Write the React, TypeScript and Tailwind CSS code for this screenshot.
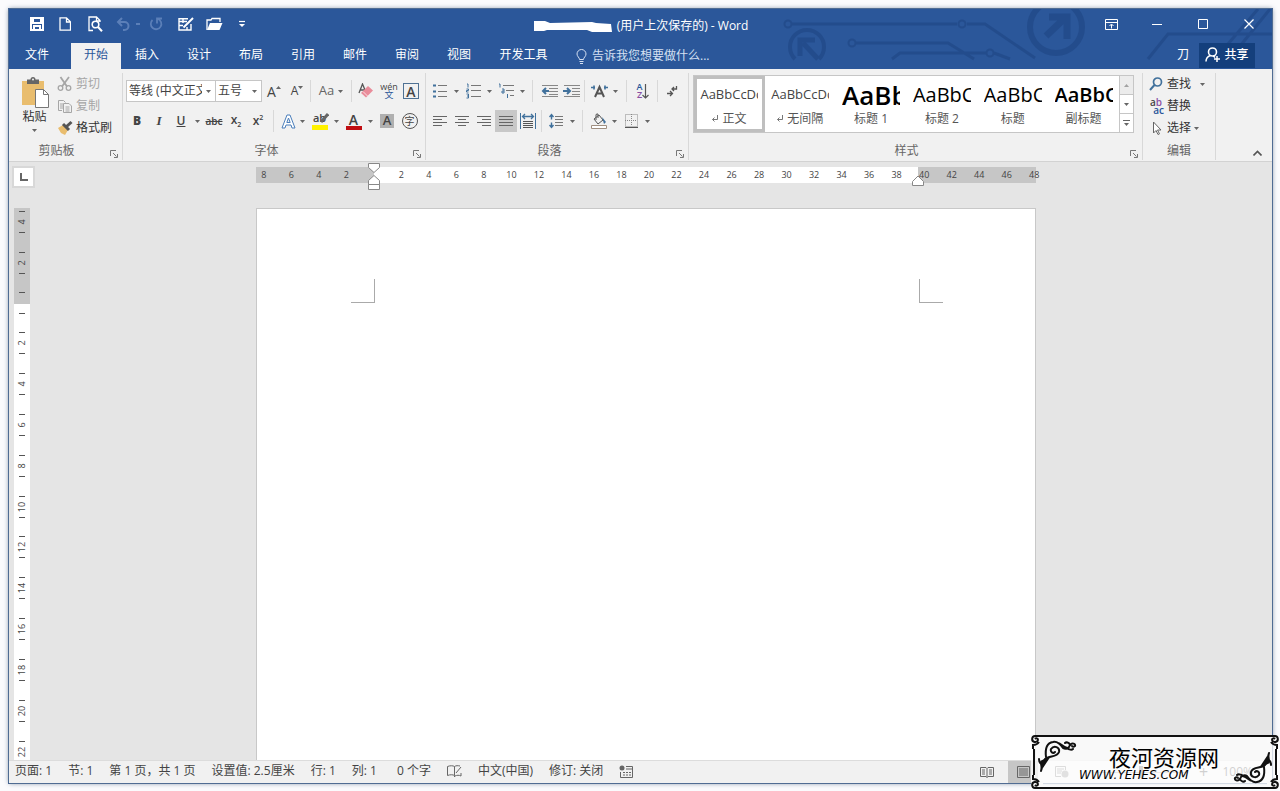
import type { ReactNode } from 'react'
import clsx from 'clsx'

const TABS = ['插入', '设计', '布局', '引用', '邮件', '审阅', '视图']

const STYLES = [
  { name: '正文', sample: 'AaBbCcDd', mark: true, look: 'text-[13px]' },
  { name: '无间隔', sample: 'AaBbCcDd', mark: true, look: 'text-[13px]' },
  { name: '标题 1', sample: 'AaBb', look: 'text-[26px] font-semibold text-black' },
  { name: '标题 2', sample: 'AaBbC', look: 'text-[20px] text-black' },
  { name: '标题', sample: 'AaBbC', look: 'text-[20px] text-black' },
  { name: '副标题', sample: 'AaBbC', look: 'text-[20px] font-semibold text-black' },
]

const H_MARKS = Array.from({ length: 29 }, (_, i) => i * 2 - 8)
const V_MARKS = Array.from({ length: 11 }, (_, i) => i * 2 + 2)

function Icon({ w = 16, h = 16, children }: { w?: number; h?: number; children: ReactNode }) {
  return (
    <svg width={w} height={h} viewBox={`0 0 ${w} ${h}`} fill="none" stroke="currentColor" className="shrink-0" aria-hidden="true">
      {children}
    </svg>
  )
}

function Arrow() {
  return (
    <svg width="5" height="3" viewBox="0 0 5 3" className="shrink-0 fill-[#666]" aria-hidden="true">
      <path d="M0 0h5L2.5 3z" />
    </svg>
  )
}

function Tool({ label, className = 'w-[22px]', children }: { label: string; className?: string; children: ReactNode }) {
  return (
    <button type="button" aria-label={label} title={label} className={clsx('flex h-[22px] shrink-0 items-center justify-center', className)}>
      {children}
    </button>
  )
}

function Drop({ label, className = 'w-[9px]' }: { label: string; className?: string }) {
  return (
    <Tool label={label} className={className}>
      <Arrow />
    </Tool>
  )
}

function Sep({ className = 'mx-[2px]' }: { className?: string }) {
  return <span className={clsx('h-[22px] w-px shrink-0 bg-[#d8d8d8]', className)} />
}

function Group({ title, launcher = true, className, children }: { title: string; launcher?: boolean; className?: string; children: ReactNode }) {
  return (
    <section aria-label={title} className={clsx('relative mt-1 mb-px flex flex-col border-r border-[#d8d8d8]', className)}>
      <div className="flex-1">{children}</div>
      <div className={clsx('h-[18px] text-center leading-[18px] text-[#666]', launcher && 'pr-[18px]')}>{title}</div>
      {launcher && (
        <button type="button" aria-label={`${title}设置`} className="absolute right-1 bottom-[2px]">
          <Icon w={8} h={8}>
            <path d="M.5 6V.5H6M3 3l3.5 3.5M7.5 4v3.5H4" stroke="#777" />
          </Icon>
        </button>
      )}
    </section>
  )
}

function Lines({ rows }: { rows: [number, number][] }) {
  return (
    <Icon w={14} h={12}>
      {rows.map(([x1, x2], i) => (
        <path key={i} d={`M${x1} ${i * 3 + 1.5}H${x2}`} stroke="#666" />
      ))}
    </Icon>
  )
}

function Circuit() {
  return (
    <svg width="492" height="52" viewBox="0 0 492 52" fill="none" stroke="#1f4684" strokeWidth="3" opacity=".6" className="pointer-events-none absolute top-0 right-0" aria-hidden="true">
      <circle cx="8" cy="15" r="3.5" strokeWidth="2" />
      <path d="M12 15h165M187 15h18l50 34" />
      <circle cx="182" cy="15" r="3.5" strokeWidth="2" />
      <circle cx="72" cy="34" r="3.5" strokeWidth="2" />
      <path d="M76 34h92l26 16M112 50l8-6h86M214 44l16 6" />
      <circle cx="210" cy="44" r="3.5" strokeWidth="2" />
      <path d="M15 50a17 17 0 1 1 24 0" strokeWidth="4" />
      <path d="M38 50 23 34M20 47V31h15" strokeWidth="5" />
      <circle cx="276" cy="18" r="26" strokeWidth="6" />
      <path d="m266 27 20-19M269 8h18v22" strokeWidth="7" />
      <path d="m368 50 20-25h104M442 42l36-42M456 42l34-42" />
    </svg>
  )
}

function TitleBar() {
  const quick = 'flex h-[30px] items-center justify-center'
  const control = 'flex h-[30px] w-[46px] items-center justify-center'
  return (
    <div className="relative grid h-[34px] grid-cols-[1fr_auto_1fr] items-start">
      <div className="flex items-center pl-[14px]">
        <button type="button" aria-label="保存" className={clsx(quick, 'w-7')}>
          <Icon w={14} h={14}>
            <path d="M1 1h12v12H1zM3 1v5h8V1M4 13V9h6v4" strokeWidth="2" />
          </Icon>
        </button>
        <button type="button" aria-label="新建" className={clsx(quick, 'w-7')}>
          <Icon w={12} h={14}>
            <path d="M1 .8h6.500l4 4v8.400H1zM7.500 1v4h4" strokeWidth="1.300" />
          </Icon>
        </button>
        <button type="button" aria-label="打印预览" className={clsx(quick, 'w-8')}>
          <Icon w={15} h={16}>
            <path d="M5 14.500H1V1h7.500L12 4.500V6M8.500 1v4H12" strokeWidth="1.300" />
            <circle cx="7.500" cy="8.500" r="3.300" strokeWidth="1.600" />
            <path d="m10 11 4 4.200" strokeWidth="2" />
          </Icon>
        </button>
        <button type="button" aria-label="撤消" disabled className={clsx(quick, 'w-6 text-[#5b7fb8]')}>
          <Icon w={14} h={14}>
            <path d="M6 1 2 5l4 4M2 5h6.500a4 4 0 0 1 0 8H7" strokeWidth="2" />
          </Icon>
        </button>
        <span className="mx-px h-[2px] w-1 bg-[#5b7fb8]" />
        <button type="button" aria-label="恢复" disabled className={clsx(quick, 'w-[30px] text-[#5b7fb8]')}>
          <Icon w={14} h={14}>
            <path d="M3.500 3A5.300 5.300 0 1 0 9 2M8 6.500V1.500h5" strokeWidth="1.800" />
          </Icon>
        </button>
        <button type="button" aria-label="绘制表格" className={clsx(quick, 'w-[30px]')}>
          <Icon w={16} h={14}>
            <path d="M10 1.700H1v11.300h12V7M1 4.500h8M1 8.500h4M5 2v4M9 10v3" strokeWidth="1.400" />
            <path d="m5.500 10.500 9.500-9.500" strokeWidth="2" />
          </Icon>
        </button>
        <button type="button" aria-label="打开" className={clsx(quick, 'w-[26px]')}>
          <Icon w={17} h={14}>
            <path d="M1 13V3h4l1-1.500h8V5" strokeWidth="1.300" />
            <path d="M1 13 4 6h12.500l-3 7z" fill="currentColor" stroke="none" />
          </Icon>
        </button>
        <button type="button" aria-label="自定义快速访问工具栏" className={clsx(quick, 'w-[30px]')}>
          <Icon w={6} h={8}>
            <path d="M0 1.500h6" strokeWidth="1.200" />
            <path d="M0 4h6L3 7z" fill="currentColor" stroke="none" />
          </Icon>
        </button>
      </div>
      <h1 className="flex h-[34px] items-center gap-1 text-[12px]">
        <Icon w={80} h={12}>
          <path d="M1 1h11l5 2 42-1 4 1 15 1 1 8H59l-5-2H14l-3 1H1z" fill="#fff" stroke="none" />
        </Icon>
        (用户上次保存的) - Word
      </h1>
      <div className="flex justify-end">
        <button type="button" aria-label="功能区显示选项" className={control}>
          <Icon w={13} h={11}>
            <path d="M.5.5h12v10H.5zM.5 3.500h12M6.500 9.500V5.500M4.500 7l2-2 2 2" />
          </Icon>
        </button>
        <button type="button" aria-label="最小化" className={control}>
          <Icon w={10} h={10}>
            <path d="M0 5.500h10" />
          </Icon>
        </button>
        <button type="button" aria-label="最大化" className={control}>
          <Icon w={10} h={10}>
            <path d="M.5.5h9v9h-9z" />
          </Icon>
        </button>
        <button type="button" aria-label="关闭" className={control}>
          <Icon w={10} h={10}>
            <path d="m.5.5 9 9M9.500.5l-9 9" strokeWidth="1.200" />
          </Icon>
        </button>
      </div>
    </div>
  )
}

function TabBar() {
  return (
    <nav className="relative flex h-[26px] items-stretch pl-[2px]">
      <button type="button" className="w-[52px] pb-[2px]">文件</button>
      <button type="button" aria-current="page" className="ml-2 w-[50px] bg-[#f1f1f1] pb-[2px] text-[#2b579a]">开始</button>
      {TABS.map((tab) => (
        <button key={tab} type="button" className="w-[52px] pb-[2px]">{tab}</button>
      ))}
      <button type="button" className="w-[77px] pb-[2px]">开发工具</button>
      <label className="flex flex-1 items-center pl-[14px] text-[#d5e0f2]">
        <Icon w={11} h={15}>
          <path d="M3.500 10.500C3.500 8.500 1 7.500 1 5a4.500 4.500 0 0 1 9 0c0 2.500-2.500 3.500-2.500 5.500zM3.500 12.500h4M4 14.500h3" />
        </Icon>
        <input aria-label="告诉我您想要做什么" placeholder="告诉我您想要做什么..." className="ml-[5px] w-[150px] bg-transparent outline-none placeholder:text-[#d5e0f2]" />
      </label>
      <button type="button" className="px-[10px] pb-[2px]">刀</button>
      <button type="button" className="mr-[17px] mb-px flex w-[56px] items-center justify-center gap-1 bg-[#143f7c] pb-[2px] font-medium">
        <Icon w={15} h={15}>
          <circle cx="7.500" cy="5" r="4" strokeWidth="1.600" />
          <path d="M1 14.500c0-3 1.500-5 4.500-6M8 9c1 .4 1.500.8 2 1.500M12 9v6M9 12h6" strokeWidth="1.500" />
        </Icon>
        共享
      </button>
    </nav>
  )
}

function ClipboardGroup() {
  const row = 'flex h-[22px] items-center gap-[3px]'
  return (
    <Group title="剪贴板" className="w-[114px] shrink-0">
      <div className="flex pl-[12px]">
        <button type="button" className="mt-1 flex w-[27px] flex-col items-center">
          <svg width="28" height="31" viewBox="0 0 28 31" aria-hidden="true">
            <path d="M1 4h22v24H1z" fill="#e9bd6e" />
            <path d="M6 2.500h3.500a2.500 2.500 0 0 1 5 0H18V7H6z" fill="#666" />
            <circle cx="12" cy="2.500" r="1" fill="#f1f1f1" />
            <path d="M14.500 12.500h8l5 5v13h-13z" fill="#fff" stroke="#777" />
            <path d="M22.500 12.500v5h5" fill="none" stroke="#777" />
          </svg>
          <span className="leading-[17px] whitespace-nowrap text-[#333]">粘贴</span>
          <span className="mt-[4px] flex"><Arrow /></span>
        </button>
        <div className="ml-[9px] flex flex-col">
          <button type="button" disabled className={clsx(row, 'text-[#a6a6a6]')}>
            <Icon w={16} h={16}>
              <path d="m3.500 1 6.500 9.500M12 1 5 10.500" strokeWidth="1.800" />
              <circle cx="3.500" cy="12" r="2.300" strokeWidth="1.300" />
              <circle cx="11.500" cy="12" r="2.300" strokeWidth="1.300" />
            </Icon>
            剪切
          </button>
          <button type="button" disabled className={clsx(row, 'text-[#a6a6a6]')}>
            <Icon w={16} h={16}>
              <path d="M5 12.500H1.500v-10h5l2 2M3 6h3M3 8h3M3 10h3" />
              <path d="M6.500 5.500H12l2.500 2.500v6.500h-8zM8.500 9h4M8.500 11h4M8.500 13h4" />
            </Icon>
            复制
          </button>
          <button type="button" className={clsx(row, 'text-[#333]')}>
            <Icon w={16} h={16}>
              <path d="m1 8 5-3 5 5-3 5-4-2z" fill="#e9bd6e" stroke="none" />
              <path d="m6 4 6 6" stroke="#555" strokeWidth="3" />
              <path d="m9 7 5.500-5" stroke="#555" strokeWidth="3" />
            </Icon>
            格式刷
          </button>
        </div>
      </div>
    </Group>
  )
}

function FontGroup() {
  return (
    <Group title="字体" className="w-[303px] shrink-0 pl-[3px]">
      <div className="mt-[7px] flex h-[22px] items-center">
        <label className="flex h-[22px] w-[90px] items-center border border-[#c6c6c6] bg-white pr-1">
          <select aria-label="字体" className="min-w-0 flex-1 appearance-none overflow-hidden pl-[2px] [text-overflow:clip]">
            <option>等线 (中文正文)</option>
          </select>
          <span className="ml-1 flex"><Arrow /></span>
        </label>
        <label className="-ml-px flex h-[22px] w-[47px] items-center border border-[#c6c6c6] bg-white pr-1">
          <select aria-label="字号" className="min-w-0 flex-1 appearance-none pl-[2px]">
            <option>五号</option>
          </select>
          <Arrow />
        </label>
        <Tool label="增大字号" className="w-6">
          <span className="text-[14px]">A</span>
          <span className="mb-2 flex rotate-180"><Arrow /></span>
        </Tool>
        <Tool label="减小字号">
          <span className="text-[12px]">A</span>
          <span className="mb-2 flex"><Arrow /></span>
        </Tool>
        <Sep />
        <Tool label="更改大小写" className="w-9 gap-1">
          <span className="text-[13px] text-[#666]">Aa</span>
          <Arrow />
        </Tool>
        <Sep />
        <Tool label="清除所有格式" className="w-6">
          <Icon w={16} h={16}>
            <path d="M1 10 4.500 1 7 7M2.500 7h4" stroke="#555" strokeWidth="1.300" />
            <path d="m3 10 7-7 5 4.500-7 7z" fill="#e98c9a" stroke="none" />
            <path d="m5 8.500 4.500 4.500" stroke="#fbdde1" />
          </Icon>
        </Tool>
        <Tool label="拼音指南">
          <span className="flex flex-col items-center leading-[8px]">
            <span className="text-[9px]">wén</span>
            <span className="text-[9px] text-[#2b579a]">文</span>
          </span>
        </Tool>
        <Tool label="字符边框">
          <span className="flex h-4 w-4 items-center justify-center border border-[#4f7294] text-[14px] font-semibold">A</span>
        </Tool>
      </div>
      <div className="mt-2 flex h-[22px] items-center font-semibold">
        <Tool label="加粗"><b>B</b></Tool>
        <Tool label="倾斜"><i className="font-['Liberation_Serif'] text-[13px]">I</i></Tool>
        <Tool label="下划线"><u>U</u></Tool>
        <Drop label="下划线选项" className="w-[11px]" />
        <Tool label="删除线"><s className="text-[10px]">abc</s></Tool>
        <Tool label="下标"><span>x<span className="align-sub text-[7px]">2</span></span></Tool>
        <Tool label="上标"><span>x<span className="align-super text-[7px]">2</span></span></Tool>
        <Sep className="mx-1" />
        <Tool label="文本效果" className="w-5">
          <Icon w={15} h={15}>
            <path d="M1 14 6 1h3l5 13h-3l-1-3H5l-1 3zM5.800 8.500h3.400L7.500 4z" stroke="#4a7ebb" fill="#fff" />
          </Icon>
        </Tool>
        <Drop label="文本效果选项" />
        <Tool label="以不同颜色突出显示文本" className="w-[25px]">
          <span className="relative flex h-[17px] w-4 justify-center border-b-5 border-[#fff200] text-[11px] leading-[10px] font-semibold">
            ab
            <svg width="10" height="12" viewBox="0 0 10 12" className="absolute top-0 -right-px" aria-hidden="true">
              <path d="M9 1 2 9" stroke="#666" strokeWidth="3" />
            </svg>
          </span>
        </Tool>
        <Drop label="突出显示选项" />
        <Tool label="字体颜色" className="w-[25px]">
          <span className="flex h-[17px] w-4 justify-center border-b-4 border-[#c00d12] text-[14px] leading-[13px]">A</span>
        </Tool>
        <Drop label="字体颜色选项" />
        <Tool label="字符底纹" className="w-6">
          <span className="flex h-[14px] w-[14px] items-center justify-center bg-[#b0b0b0] text-[13px]">A</span>
        </Tool>
        <Tool label="带圈字符" className="w-[21px]">
          <span className="flex h-4 w-4 items-center justify-center rounded-full border border-[#555] text-[10px] font-normal">字</span>
        </Tool>
      </div>
    </Group>
  )
}

function ParagraphGroup() {
  return (
    <Group title="段落" className="w-[263px] shrink-0 pl-[3px]">
      <div className="mt-[7px] flex h-[22px] items-center">
        <Tool label="项目符号">
          <Icon w={14} h={14}>
            <path d="M0 1.500h3M0 7.500h3M0 12.500h3" stroke="#41719c" strokeWidth="2" />
            <path d="M5 1.500h9M5 7.500h9M5 12.500h9" stroke="#777" />
          </Icon>
        </Tool>
        <Drop label="项目符号库" className="w-[11px]" />
        <Tool label="编号" className="w-[23px]">
          <Icon w={15} h={16}>
            <path d="M1 1h1v3.500M.5 6h2v1.500h-2V9h2M.5 11h2v4h-2M1 13h1" stroke="#41719c" />
            <path d="M5 2.500h10M5 7.500h10M5 13.500h10" stroke="#777" />
          </Icon>
        </Tool>
        <Drop label="编号库" />
        <Tool label="多级列表" className="w-6">
          <Icon w={16} h={16}>
            <path d="M1 1h1v3.500M4 6h2v4H4V8h2M9.500 11v4" stroke="#41719c" />
            <path d="M5 2.500h11M8 7.500h8M12 12.500h4" stroke="#777" />
          </Icon>
        </Tool>
        <Drop label="列表库" />
        <Sep className="mx-[5px]" />
        <Tool label="减少缩进量">
          <Icon w={17} h={14}>
            <path d="M1 1.500h16M8 4.500h9M8 7.500h9M8 10.500h9M1 12.500h16" stroke="#888" />
            <path d="M8 7H2M5 4 2 7l3 3" stroke="#41719c" strokeWidth="2" />
          </Icon>
        </Tool>
        <Tool label="增加缩进量">
          <Icon w={17} h={14}>
            <path d="M1 1.500h16M9 4.500h8M9 7.500h8M9 10.500h8M1 12.500h16" stroke="#888" />
            <path d="M0 7h6M4 4l3 3-3 3" stroke="#41719c" strokeWidth="2" />
          </Icon>
        </Tool>
        <Sep />
        <Tool label="中文版式" className="w-6">
          <Icon w={17} h={14}>
            <path d="m4 13 4.500-10L13 13M5.500 9.500h6" stroke="#555" strokeWidth="2" />
            <path d="M0 3.500h4M13 3.500h4M3 1.500v4M14 1.500v4" stroke="#41719c" strokeWidth="1.600" />
          </Icon>
        </Tool>
        <Drop label="中文版式选项" />
        <Sep className="mx-[6px]" />
        <Tool label="排序" className="w-5">
          <span className="flex flex-col text-[9px] leading-[8px] font-semibold">
            <span className="text-[#2b579a]">A</span>
            <span className="text-[#8a4fa3]">Z</span>
          </span>
          <Icon w={7} h={15}>
            <path d="M3.500 0v14M.5 11l3 3 3-3" stroke="#555" strokeWidth="1.200" />
          </Icon>
        </Tool>
        <Sep className="mx-1" />
        <Tool label="显示编辑标记" className="w-5">
          <Icon w={12} h={12}>
            <path d="M10.500 1v3H6M8 2 6 4l2 2M1 8.500h5M4 6l2.500 2.500L4 11" stroke="#555" strokeWidth="1.300" />
          </Icon>
        </Tool>
      </div>
      <div className="mt-2 flex h-[22px] items-center">
        <Tool label="左对齐"><Lines rows={[[0, 14], [0, 9], [0, 14], [0, 9]]} /></Tool>
        <Tool label="居中"><Lines rows={[[0, 14], [3, 11], [0, 14], [3, 11]]} /></Tool>
        <Tool label="右对齐"><Lines rows={[[0, 14], [5, 14], [0, 14], [5, 14]]} /></Tool>
        <Tool label="两端对齐" className="w-[22px] bg-[#c8c8c8]"><Lines rows={[[0, 14], [0, 14], [0, 14], [0, 14]]} /></Tool>
        <Tool label="分散对齐">
          <Icon w={16} h={16}>
            <path d="M.5 0v16M15.500 0v16" stroke="#41719c" />
            <path d="M3 3.500h10M5 1 2.500 3.500 5 6M11 1l2.500 2.500L11 6" stroke="#41719c" strokeWidth="1.300" />
            <path d="M3 8.500h10M3 10.500h10M3 12.500h10M3 14.500h10" stroke="#555" />
          </Icon>
        </Tool>
        <Sep />
        <Tool label="行和段落间距" className="w-6">
          <Icon w={14} h={16}>
            <path d="M2.500 1.500v5M.5 4l2-2.500 2 2.500M2.500 9.500v5M.5 12l2 2.500 2-2.500" stroke="#41719c" strokeWidth="1.400" />
            <path d="M6 3.500h8M6 6.500h8M6 9.500h8M6 12.500h8" stroke="#777" />
          </Icon>
        </Tool>
        <Drop label="间距选项" />
        <Sep className="mx-[5px]" />
        <Tool label="底纹">
          <Icon w={16} h={16}>
            <path d="m3 6 5-4 4 5-5 4zM5 7V2q0-1.500 2-1v4" stroke="#555" />
            <path d="m11 4 4 5-2 2z" fill="#41719c" stroke="none" />
            <path d="M.5 12.500h15v3H.5z" fill="#fff" stroke="#a08f80" />
          </Icon>
        </Tool>
        <Drop label="底纹颜色" />
        <Tool label="边框" className="w-6">
          <Icon w={13} h={14}>
            <path d="M.5.5h12v12H.5zM6.500 0v12M0 6.500h12" stroke="#888" strokeDasharray="1 1" />
            <path d="M0 13.500h13" stroke="#555" />
          </Icon>
        </Tool>
        <Drop label="边框选项" />
      </div>
    </Group>
  )
}

function StylesGroup() {
  return (
    <Group title="样式" className="min-w-0 flex-1">
      <div className="mt-[2px] mr-2 ml-1 flex h-[58px] border border-[#c6c6c6] bg-white">
        {STYLES.map((style, i) => (
          <button
            key={style.name}
            type="button"
            className={clsx('flex min-w-0 flex-1 flex-col items-center overflow-hidden border-3', i === 0 ? 'border-[#bfbfbf]' : 'border-transparent')}
          >
            <span className={clsx('flex h-8 w-[58px] items-center overflow-hidden whitespace-nowrap', style.look)}>{style.sample}</span>
            <span className="flex items-center gap-1 leading-[15px] whitespace-nowrap text-[#555]">
              {style.mark && (
                <Icon w={6} h={7}>
                  <path d="M5.500 0v4.500h-5M2.500 2.500l-2 2 2 2" stroke="#777" />
                </Icon>
              )}
              {style.name}
            </span>
          </button>
        ))}
        <div className="flex w-[14px] flex-col border-l border-[#c6c6c6]">
          <button type="button" aria-label="上一行" disabled className="flex flex-1 items-center justify-center bg-[#e1e1e1] opacity-60">
            <span className="flex rotate-180"><Arrow /></span>
          </button>
          <button type="button" aria-label="下一行" className="flex flex-1 items-center justify-center border-y border-[#c6c6c6]"><Arrow /></button>
          <button type="button" aria-label="其他" className="flex flex-1 flex-col items-center justify-center gap-[2px]">
            <span className="h-px w-[7px] bg-[#666]" />
            <Arrow />
          </button>
        </div>
      </div>
    </Group>
  )
}

function EditingGroup() {
  const row = 'flex h-[22px] items-center gap-[3px] text-[#333]'
  return (
    <Group title="编辑" launcher={false} className="w-[73px] shrink-0">
      <div className="flex flex-col items-start pl-[5px]">
        <button type="button" className={row}>
          <Icon w={16} h={14}>
            <circle cx="9.500" cy="5" r="4" stroke="#41719c" strokeWidth="1.700" />
            <path d="m6.500 8-4.500 5" stroke="#41719c" strokeWidth="2" />
          </Icon>
          查找
          <span className="ml-[6px] flex"><Arrow /></span>
        </button>
        <button type="button" className={row}>
          <span className="flex w-4 flex-col text-[10px] leading-[8px] font-semibold">
            <span className="text-[#444]">a<span className="text-[#8a4fa3]">b</span></span>
            <span className="text-right text-[#2b579a]">ac</span>
          </span>
          替换
        </button>
        <button type="button" className={row}>
          <Icon w={16} h={14}>
            <path d="M5.500 1v11l2.500-2.500 2 4 1.500-.7-2-3.800H13z" stroke="#666" fill="#fff" />
          </Icon>
          选择
          <Arrow />
        </button>
      </div>
    </Group>
  )
}

function Ruler() {
  return (
    <div className="relative flex h-4 w-[780px] shrink-0">
      <div className="w-[118px] bg-[#c6c6c6]" />
      <div className="flex-1 bg-white" />
      <div className="w-[118px] bg-[#c6c6c6]" />
      <div className="absolute inset-y-0 -right-3 -left-[6px] flex text-[9px] leading-4 text-[#444]">
        {H_MARKS.map((n) => (
          <span key={n} className="min-w-0 flex-1 text-center">{n === 0 ? '' : Math.abs(n)}</span>
        ))}
      </div>
      <svg width="12" height="28" viewBox="0 0 12 28" className="absolute -top-1 left-[112px] fill-white stroke-[#888]" aria-hidden="true">
        <path d="M.5.5h11v4L6 9.500.5 4.500zM.5 21.500v-4L6 12.500l5.500 5v4zM.5 21.500h11v5H.5z" />
      </svg>
      <svg width="12" height="11" viewBox="0 0 12 11" className="absolute top-2 right-[112px] fill-white stroke-[#888]" aria-hidden="true">
        <path d="M.5 10.500v-4L6 1l5.500 5.500v4z" />
      </svg>
    </div>
  )
}

function VMark({ n }: { n: number }) {
  return (
    <div className="flex min-h-0 flex-1 flex-col items-center justify-center gap-1">
      <span className="h-px w-[6px] bg-[#555]" />
      <span className="flex h-3 w-4 -rotate-90 items-center justify-center text-[9px]">{n}</span>
      <span className="h-px w-[6px] bg-[#555]" />
    </div>
  )
}

function Workspace() {
  return (
    <main className="flex min-h-0 flex-1 overflow-hidden border-t border-[#d2d2d2] bg-[#e5e5e5]">
      <div className="flex w-[26px] shrink-0 flex-col pl-[3px]">
        <button type="button" aria-label="制表符" className="mt-1 flex h-[22px] w-[23px] shrink-0 items-center justify-center border-2 border-[#d8d8d8] bg-white">
          <Icon w={8} h={8}>
            <path d="M1 0v7h7" stroke="#666" strokeWidth="2" />
          </Icon>
        </button>
        <div className="mt-5 ml-[2px] flex w-4 shrink-0 flex-col text-[#444]">
          <div className="flex h-24 flex-col justify-end overflow-hidden bg-[#c6c6c6]">
            <div className="flex h-[41px] shrink-0 flex-col"><VMark n={4} /></div>
            <div className="flex h-[41px] shrink-0 flex-col"><VMark n={2} /></div>
            <div className="flex h-[21px] shrink-0 justify-center pt-[9px]"><span className="h-px w-[6px] bg-[#555]" /></div>
          </div>
          <div className="flex h-[468px] flex-col bg-white">
            <div className="flex h-[19px] shrink-0 justify-center pt-[9px]"><span className="h-px w-[6px] bg-[#555]" /></div>
            {V_MARKS.map((n) => <VMark key={n} n={n} />)}
          </div>
        </div>
      </div>
      <div className="flex flex-1 flex-col items-center overflow-hidden pt-[5px] pr-[15px]">
        <Ruler />
        <article aria-label="文档" className="mt-[25px] flex w-[780px] flex-1 shrink-0 items-start justify-between border border-b-0 border-[#c8c8c8] bg-white pt-[70px] pr-[92px] pl-[94px]">
          <span className="h-6 w-6 border-r border-b border-[#aaa]" />
          <span className="h-6 w-6 border-b border-l border-[#aaa]" />
        </article>
      </div>
    </main>
  )
}

function StatusBar() {
  return (
    <footer className="flex h-[23px] shrink-0 items-center border-t border-[#dcdcdc] bg-[#f1f1f1] pb-[2px] pl-[6px] whitespace-nowrap">
      <div className="flex items-center gap-4">
        <span>页面: 1</span>
        <span>节: 1</span>
        <span>第 1 页，共 1 页</span>
        <span>设置值: 2.5厘米</span>
        <span>行: 1</span>
        <span>列: 1</span>
        <span className="ml-1">0 个字</span>
        <button type="button" aria-label="校对">
          <Icon w={15} h={12}>
            <path d="M7.500 10.500C6 9.500 3 9.500.5 10.500v-9C3 .5 6 .5 7.500 1.500zM7.500 10.500V12M7.500 1.500C9 .5 11 .5 13 1M8 11c2-1 4-1 6 0V8M9 8l5-6" stroke="#666" />
          </Icon>
        </button>
        <button type="button">中文(中国)</button>
        <button type="button">修订: 关闭</button>
        <button type="button" aria-label="录制宏">
          <Icon w={14} h={13}>
            <path d="M7 1.500h6.500v11h-12V7M7 4h6M4 7.500h2M7 7.500h2M10 7.500h2M4 10h2M7 10h2M10 10h2" stroke="#666" />
            <circle cx="3" cy="3" r="2.500" fill="#666" stroke="none" />
          </Icon>
        </button>
      </div>
      <div className="-mb-[2px] ml-auto flex h-[22px] items-center pr-[19px]">
        <button type="button" aria-label="阅读视图" className="flex w-[43px] justify-center">
          <Icon w={14} h={12}>
            <path d="M.5 1.500h5.500l1 1 1-1h5.500v9H8l-1 1-1-1H.5zM7 2.500v9M2 4h3M2 6h3M2 8h3M9 4h3M9 6h3M9 8h3" stroke="#666" />
          </Icon>
        </button>
        <button type="button" aria-label="页面视图" className="flex h-full w-[30px] items-center justify-center bg-[#c6c6c6]">
          <Icon w={13} h={12}>
            <path d="M.5.5h12v11H.5zM2 3h9M2 5h9M2 7h9M2 9h9" stroke="#666" />
          </Icon>
        </button>
        <button type="button" aria-label="Web 版式视图" className="flex w-12 justify-center">
          <Icon w={14} h={12}>
            <path d="M6 10.500H.5v-10h10V4M2 3h7M2 5h5M2 7h4" stroke="#777" />
            <circle cx="10" cy="8" r="3.500" fill="#888" stroke="none" />
          </Icon>
        </button>
        <input type="range" aria-label="显示比例" defaultValue={50} className="mx-2 h-3 w-[94px] appearance-none bg-[linear-gradient(#aaa,#aaa)] bg-[length:100%_1px] bg-center bg-no-repeat [&::-webkit-slider-thumb]:h-3 [&::-webkit-slider-thumb]:w-1 [&::-webkit-slider-thumb]:appearance-none [&::-webkit-slider-thumb]:bg-[#555]" />
        <button type="button" aria-label="放大" className="w-[14px] text-[16px] leading-4">+</button>
        <button type="button" className="ml-3">100%</button>
      </div>
    </footer>
  )
}

function Flourish({ className }: { className?: string }) {
  return (
    <svg width="42" height="34" viewBox="0 0 42 34" fill="none" stroke="#111" strokeWidth="2" strokeLinecap="round" className={className} aria-hidden="true">
      <path d="M4 32c2-6 1-8 4-12 4-4 12-1 14-7 1-5-5-7-8-3-1 3 2 5 4 3" />
      <path d="M9 18C8 10 10 4 16 3c5-1 8 3 10 6 3 2 6 0 7-3 2-3 6-1 5 1-1 1-3 1-3 0" />
      <path d="M2 20c0 4 2 5 4 5M33 6c-1-3-4-3-5-2M30 9c2 2 5 2 6 1" />
      <path d="M3 22 14 17 6 29zM22 3l5 7 6-1-5-2zM4 32l-1-8 5-2z" fill="#111" stroke="none" />
    </svg>
  )
}

function Corner({ className }: { className: string }) {
  return (
    <svg width="12" height="14" viewBox="0 0 12 14" fill="none" stroke="#111" strokeWidth="2" className={clsx('absolute', className)} aria-hidden="true">
      <path d="M0 0h12v8H4v6H0z" fill="#fafafa" stroke="none" />
      <path d="M12 1H4a3 3 0 1 0 3 4c0-2-2-2-3-1M2 14V10q4 0 6-3" />
    </svg>
  )
}

function Watermark() {
  return (
    <aside className="absolute right-px bottom-[2px] flex h-[54px] w-[248px] bg-white/75 text-black">
      <div className="absolute inset-x-[2px] inset-y-0 border-2 border-[#111]" />
      <Corner className="top-0 left-0" />
      <Corner className="top-0 right-0 -scale-x-100" />
      <Corner className="bottom-0 left-0 -scale-y-100" />
      <Corner className="right-0 bottom-0 -scale-100" />
      <Flourish className="mt-[4px] ml-[6px] shrink-0" />
      <div className="flex flex-1 flex-col pt-[9px]">
        <strong className="mr-3 self-end font-['Noto_Sans_CJK_SC',sans-serif] text-[22px] leading-6 font-normal whitespace-nowrap">夜河资源网</strong>
        <a href="#" className="self-start font-['DejaVu_Sans',sans-serif] text-[12px] leading-[14px] whitespace-nowrap italic">WWW.YEHES.COM</a>
      </div>
      <Flourish className="mr-[6px] mb-[4px] shrink-0 rotate-180 self-end" />
    </aside>
  )
}

export default function App() {
  return (
    <div className="relative flex h-screen bg-[#fbfbfd] pt-[9px] pr-2 pb-2 pl-[9px] font-['Open_Sans','Noto_Sans_CJK_SC',sans-serif] text-[12px] text-[#444]">
      <div className="flex min-w-0 flex-1 flex-col shadow-[0_0_5px_#6c7f98,0_0_0_1px_#3c5f8f]">
        <header className="relative shrink-0 bg-[#2b579a] text-white">
          <Circuit />
          <TitleBar />
          <TabBar />
        </header>
        <div className="flex h-[92px] shrink-0 bg-[#f1f1f1]">
          <ClipboardGroup />
          <FontGroup />
          <ParagraphGroup />
          <StylesGroup />
          <EditingGroup />
          <div className="flex w-14 shrink-0 items-end justify-end pr-[10px] pb-[5px]">
            <button type="button" aria-label="折叠功能区">
              <Icon w={9} h={6}>
                <path d="m.5 5.500 4-4 4 4" stroke="#555" strokeWidth="1.600" />
              </Icon>
            </button>
          </div>
        </div>
        <Workspace />
        <StatusBar />
      </div>
      <Watermark />
    </div>
  )
}
